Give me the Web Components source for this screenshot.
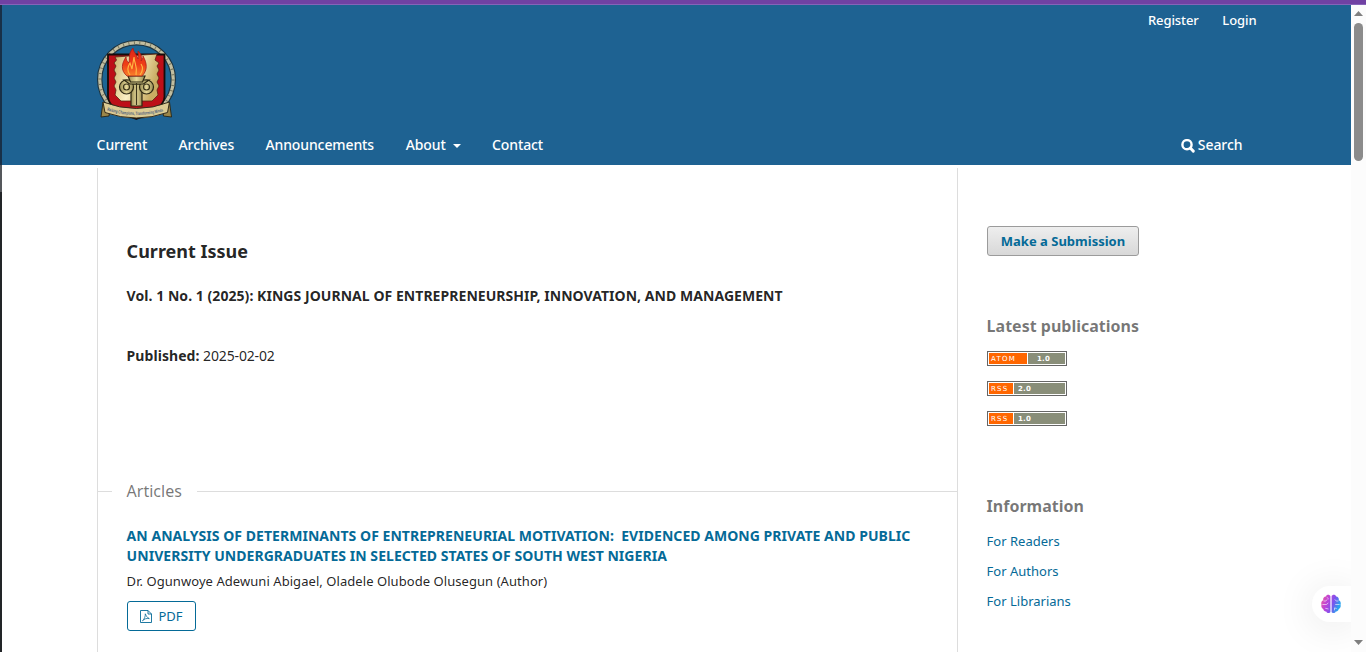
<!DOCTYPE html>
<html lang="en">
<head>
<meta charset="utf-8">
<title>Kings Journal of Entrepreneurship, Innovation, and Management</title>
<style>
html,body{margin:0;height:100%;overflow:hidden;background:#fff}
body{font:14px/20px "Noto Sans",sans-serif;color:rgba(0,0,0,.87)}
</style>
</head>
<body>
<journal-window>
  <journal-page>
    <site-header slot="header"></site-header>
    <issue-view slot="main">
      <article-summary pages="PDF"><span slot="title">AN ANALYSIS OF DETERMINANTS OF ENTREPRENEURIAL MOTIVATION:&nbsp; EVIDENCED AMONG PRIVATE AND PUBLIC UNIVERSITY UNDERGRADUATES IN SELECTED STATES OF SOUTH WEST NIGERIA</span><span slot="authors">Dr. Ogunwoye Adewuni Abigael, Oladele Olubode Olusegun (Author)</span></article-summary>
    </issue-view>
    <side-bar slot="side"></side-bar>
  </journal-page>
</journal-window>
<script>
function define(name, markup, setup) {
  const template = document.createElement('template');
  template.innerHTML = markup;
  customElements.define(name, class extends HTMLElement {
    constructor() {
      super();
      this.attachShadow({mode: 'open'}).append(template.content.cloneNode(true));
    }
    connectedCallback() { if (setup) setup(this, this.shadowRoot); }
  });
}

define('journal-window', `
<style>
:host{display:grid;grid-template:5px 1fr / 2px 1fr 15px;height:100vh;position:relative;overflow:hidden}
.top{grid-column:1/-1;background:#7041a3;box-sizing:border-box;border-bottom:1px solid #8563b8}
.edge{background:linear-gradient(#183048 0 160px,#55585c 160px 187px,#222528 187px)}
.view{overflow:hidden;min-width:0;min-height:0}
</style>
<div class="top"></div><div class="edge"></div><div class="view"><slot></slot></div><scroll-track></scroll-track>
<assistant-tab></assistant-tab>`);

define('scroll-track', `
<style>
:host{display:flex;flex-direction:column;align-items:center;background:#fcfcfc;z-index:1}
svg{display:block;width:15px;height:18px}
.thumb{width:9px;height:138px;border-radius:5px;background:#8b8b8b}
.gap{flex:1}
</style>
<svg viewBox="0 0 15 18"><path d="M7.5 6 12 11H3z" fill="#7f7f7f"/></svg>
<div class="thumb"></div><div class="gap"></div>
<svg viewBox="0 0 15 18"><path d="M3 6h9l-4.5 5z" fill="#7f7f7f"/></svg>`);

define('assistant-tab', `
<style>
:host{position:absolute;right:15px;bottom:30px;width:39px;height:36px;border-radius:18px 0 0 18px;background:#fff;box-shadow:0 4px 40px rgba(0,0,0,.11);display:flex;align-items:center;padding-left:9px;box-sizing:border-box}
svg{width:20px;height:20px}
</style>
<svg viewBox="0 0 20 20"><defs><linearGradient id="g" x1="0" y1="0" x2="1" y2=".35"><stop stop-color="#f0609a"/><stop offset=".4" stop-color="#bb42da"/><stop offset=".7" stop-color="#7b54ed"/><stop offset="1" stop-color="#2aa4ee"/></linearGradient></defs>
<path fill="url(#g)" d="M9.4 2.3C8.700.2 5.500.3 4.800 2.500 2.700 2.600 1.800 4.500 2.300 6.200 0 7 0 9.600.5 10.700-.1 12.600.8 14.300 2.200 15 2.700 17 4.200 17.500 5.200 17.500 6 19.500 8.700 19.500 9.400 18ZM10.600 2.300C11.300.2 14.500.3 15.200 2.500 17.300 2.600 18.200 4.500 17.700 6.200 20 7 20 9.600 19.500 10.700 20.100 12.600 19.200 14.300 17.800 15 17.300 17 15.800 17.500 14.800 17.500 14 19.500 11.300 19.500 10.600 18Z"/>
<g fill="none" stroke="#fff" stroke-opacity=".65" stroke-width=".9" stroke-linecap="round"><path d="M3 7c1.500.4 2.400-.2 3-1.200M1.800 10.500h3.600L7 9.200M4.700 14.400l2.400.5M6 3.500l1.500 1.300M17 7c-1.500.4-2.400-.2-3-1.200M18.200 10.500h-3.600M15.300 14.400l-1.800-.5v2"/></g></svg>`);

define('journal-page', `
<style>
:host{display:block}
.body{width:1160px;margin:0 0 0 95px;padding-top:3px;display:flex;height:484px}
.main{width:861px;box-sizing:border-box;border:solid #ddd;border-width:0 1px}
.side{flex:1}
</style>
<slot name="header"></slot>
<div class="body"><div class="main"><slot name="main"></slot></div><div class="side"><slot name="side"></slot></div></div>`);

define('site-header', `
<style>
:host{display:block;height:160px;background:#1e6292;color:#fff;box-sizing:border-box}
.inner{width:1160px;height:160px;margin-left:95px;display:flex;flex-direction:column}
.user{display:flex;justify-content:flex-end;gap:23.500px;font-size:13px;font-weight:500;height:30px;line-height:30px;margin-right:.5px}
.user span{letter-spacing:-.08px}
journal-crest{margin-top:5px}
nav{display:flex;align-items:center;margin-top:9px;height:28px;font-weight:500;letter-spacing:-.11px}
nav a{margin-right:31.700px;margin-left:-.4px;white-space:nowrap}
.about{margin-right:31.700px;display:flex;align-items:center;gap:7px}
.about a{margin:0}
.about i{border:4px solid transparent;border-top-color:#fff;border-bottom:0;margin-top:2px}
.search{margin-left:auto;margin-right:14.500px;display:flex;align-items:center;gap:3px;letter-spacing:-.05px}
.search svg{width:14px;height:14px;margin-top:1px}
</style>
<div class="inner">
<div class="user"><span>Register</span><span>Login</span></div>
<journal-crest></journal-crest>
<nav><a>Current</a><a>Archives</a><a>Announcements</a><span class="about"><a>About</a><i></i></span><a>Contact</a>
<span class="search"><svg viewBox="0 0 14 14" fill="none" stroke="#fff"><circle cx="6" cy="5.700" r="4.600" stroke-width="2.400"/><path d="m9.500 9.300 2.800 2.800" stroke-width="2.900" stroke-linecap="round"/></svg><span>Search</span></span></nav></div>`);

define('journal-crest', `
<style>:host{display:block;width:80px;height:82px}svg{display:block}</style>
<svg width="80" height="82" viewBox="0 0 80 82">
<defs><linearGradient id="gold" x1="0" x2="1" y2=".3"><stop stop-color="#c9b06a"/><stop offset=".5" stop-color="#faf0c4"/><stop offset="1" stop-color="#c9ac62"/></linearGradient>
<linearGradient id="fire" x1="0" x2="0" y1="0" y2="1"><stop stop-color="#df2416"/><stop offset=".6" stop-color="#ee3f18"/><stop offset="1" stop-color="#f9822a"/></linearGradient>
<linearGradient id="col" x1="0" x2="1"><stop stop-color="#988c54"/><stop offset=".5" stop-color="#e5d898"/><stop offset="1" stop-color="#988c54"/></linearGradient></defs>
<circle cx="39.500" cy="39.500" r="36.800" fill="#1c6593" stroke="#1d3440" stroke-width="5.400"/>
<circle cx="39.500" cy="39.500" r="36.800" fill="none" stroke="#c2bea0" stroke-width="3.200"/>
<circle cx="39.500" cy="39.500" r="36.800" fill="none" stroke="#77775f" stroke-width="3.200" stroke-dasharray="1 4.500"/>
<path d="M11 14.500h56.500v42c0 11-15 17-28 22.500C26 73.500 11 67.500 11 56.500z" fill="#bd0f18" stroke="#160d0b" stroke-width="1.800"/>
<path d="m18 17 1.500 3-2.500 3 2 3-2 4 2 4-2 4 2 4-2 4 2 4-1 5 6 6h31l6-6-1-5 2-4-2-4 2-4-2-4 2-4-2-4 2-3-4-3 2-6z" fill="url(#gold)" stroke="#5a2513" stroke-width=".8"/>
<g stroke="#2d2813" stroke-width="1.200" fill="url(#col)"><path d="M34 44h11v22H34z"/><circle cx="29.500" cy="47" r="7"/><circle cx="49.500" cy="47" r="7"/><path d="M27 40h25l-5.500 4h-14z"/><path d="M31 36h17l-2.500 6h-12z"/></g>
<g fill="none" stroke="#3b341b" stroke-width="1.200"><circle cx="29.500" cy="47" r="3"/><circle cx="49.500" cy="47" r="3"/><path d="M39.500 43v22"/></g>
<path d="M30 36c-7-6-5-13-1-19 0 3 1 4 3 6 1-6-1-9 4-15 0 4 4 6 5 11 1-2 0-5 0-8 4 3 4 8 3 10 1-1 2-3 2-5 4 7 5 14-1 20z" fill="url(#fire)" stroke="#a91d16" stroke-width=".8"/>
<path d="M33 35c-4-5-2-9 0-12l2 6 2-12c0 6 4 9 2 18M43 35c3-4 3-8 1-11" fill="none" stroke="#ffb542" stroke-width="1.200"/>
<path d="m6 62-2 15 8-1 1-8zM72.500 62l2 15-8-1-1-8z" fill="#9b8649" stroke="#282413" stroke-width=".9"/>
<path d="M6 62q33.500 13 66.500 0l-2 10.500q-31 11-62.500 0z" fill="#dccb94" stroke="#342c1b"/>
<path id="motto" d="M10 70.500q29.500 9 59 0" fill="none"/>
<text font-family="Liberation Sans,sans-serif" font-weight="700" font-size="4.600" fill="#4a5c7c"><textPath href="#motto" textLength="57" lengthAdjust="spacingAndGlyphs">Raising Champions, Transforming Minds</textPath></text>
</svg>`);

define('issue-view', `
<style>
:host{display:block;padding-top:71px}
h1{font-size:18px;line-height:30px;margin:-3px 0 0 28.600px;font-weight:700}
h2{font-size:14px;line-height:20px;margin:20px 0 0 28.600px;font-weight:700;letter-spacing:.05px}
.published{margin:40px 0 0 28.600px}
.published b{letter-spacing:.06px}
.published span{letter-spacing:-.15px}
.rule{display:flex;align-items:center;margin-top:115px;height:20px;font-size:16px;color:rgba(0,0,0,.54)}
.rule:before{content:"";width:14px;height:1px;background:#ddd}
.rule span{padding:0 15px 0 14.600px}
.rule:after{content:"";flex:1;height:1px;background:#ddd}
</style>
<h1>Current Issue</h1>
<h2>Vol. 1 No. 1 (2025): KINGS JOURNAL OF ENTREPRENEURSHIP, INNOVATION, AND MANAGEMENT</h2>
<div class="published"><b>Published:</b> <span>2025-02-02</span></div>
<div class="rule"><span>Articles</span></div>
<slot></slot>`);

define('article-summary', `
<style>
:host{display:block;padding:25px 29px 0 28.600px}
.title{font-weight:700;color:#056a97;letter-spacing:.042px}
.authors{font-size:13px;line-height:20px;margin-top:5px;letter-spacing:.06px}
.pdf{display:inline-flex;align-items:center;gap:6px;box-sizing:border-box;width:69px;height:30px;margin:10px 0 0 .4px;padding-left:12.500px;border:1px solid #056a97;border-radius:3px;color:#056a97;font-size:13px}
svg{width:12px;height:13px}
</style>
<div class="title"><slot name="title"></slot></div><div class="authors"><slot name="authors"></slot></div>
<div class="pdf"><svg viewBox="0 0 12 13" fill="none" stroke="#056a97" stroke-width=".9"><path d="M.5.5h7.500l3.500 3.500v8.500H.5zM8 .5V4h3.500"/><path d="M5.300 3.800c1 2 1 3.200 4 4.800-3-.5-5 .3-6.800 2.200 1.800-1.500 3-4.500 2.800-7z" stroke-width=".8"/></svg><span></span></div>`,
(el, root) => { root.querySelector('.pdf span').textContent = el.getAttribute('pages'); });

define('feed-badge', `
<style>
:host{display:flex;box-sizing:border-box;width:80px;height:15px;border:1px solid #666;padding:1px;background:#fff;color:#fff;font:700 7px/12px "DejaVu Sans",sans-serif;gap:1px}
span{height:11px}
.kind{background:#f60;width:var(--kind,24px);padding-left:2px;box-sizing:border-box;letter-spacing:1.200px;font-weight:400}
.ver{background:#898e79;flex:1;padding-left:var(--inset,4px);letter-spacing:.2px}
</style>
<span class="kind"></span><span class="ver"></span>`,
(el, root) => { root.querySelector('.kind').textContent = el.getAttribute('kind'); root.querySelector('.ver').textContent = el.getAttribute('version'); });

define('side-bar', `
<style>
:host{display:block;padding:58px 0 0 29px}
.button{display:block;box-sizing:border-box;width:152px;height:30px;border:1px solid #9b9b9b;border-radius:3px;background:linear-gradient(#eee,#d8d8d8);color:#056a97;font-size:13px;font-weight:700;line-height:29px;text-align:center}
h2{font-size:16px;line-height:20px;font-weight:700;margin:60px 0 15px -.4px;color:rgba(0,0,0,.54)}
feed-badge{margin-bottom:15px}
.atom{--kind:38px;--inset:9px}
h2.info{margin-top:70px;margin-bottom:15px}
a{display:block;font-size:13px;line-height:20px;margin:0 0 10px -.4px;color:#056a97}
</style>
<div class="button">Make a Submission</div>
<h2>Latest publications</h2>
<feed-badge class="atom" kind="ATOM" version="1.0"></feed-badge><feed-badge kind="RSS" version="2.0"></feed-badge><feed-badge kind="RSS" version="1.0"></feed-badge>
<h2 class="info">Information</h2>
<a>For Readers</a><a>For Authors</a><a>For Librarians</a>`);
</script>
</body>
</html>
